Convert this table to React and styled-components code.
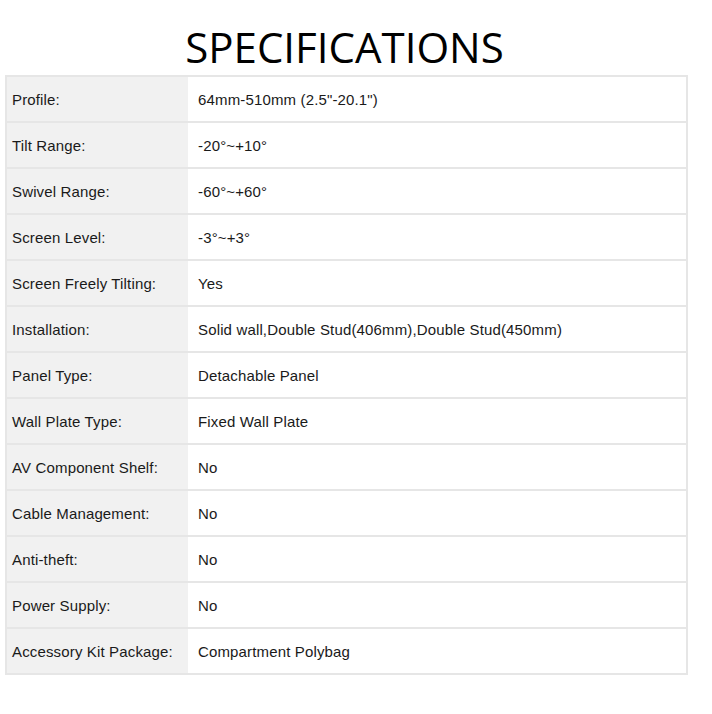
import styled, { createGlobalStyle } from "styled-components";

const GlobalStyle = createGlobalStyle`
	body {
		margin: 0;
		background: #fff;
	}
`;

const Page = styled.div`
	width: 683px;
	padding: 18px 0 0 5px;
`;

const Title = styled.h1`
	margin: 0;
	text-align: center;
	font-family: "Open Sans", "Noto Sans", sans-serif;
	font-weight: 400;
	font-size: 42px;
	line-height: 57px;
	color: #000;
	padding-right: 4px;
`;

const Table = styled.table`
	width: 100%;
	border-collapse: collapse;
	border: 2px solid #e6e6e6;
	font-family: "Liberation Sans", Arial, sans-serif;
	font-size: 15px;
	color: #1a1a1a;
`;

const Row = styled.tr`
	border-top: 2px solid #e6e6e6;

	&:first-child {
		border-top: none;
	}
`;

const Cell = styled.td`
	height: 44px;
	padding: 0 0 0 ${({ $label }) => ($label ? "5px" : "10px")};
	width: ${({ $label }) => ($label ? "176px" : "auto")};
	background: ${({ $label }) => ($label ? "#f1f1f1" : "#fff")};
	vertical-align: middle;
	white-space: nowrap;
	letter-spacing: 0.15px;
`;

const specs = [
	["Profile:", "64mm-510mm (2.5\"-20.1\")"],
	["Tilt Range:", "-20°~+10°"],
	["Swivel Range:", "-60°~+60°"],
	["Screen Level:", "-3°~+3°"],
	["Screen Freely Tilting:", "Yes"],
	["Installation:", "Solid wall,Double Stud(406mm),Double Stud(450mm)"],
	["Panel Type:", "Detachable Panel"],
	["Wall Plate Type:", "Fixed Wall Plate"],
	["AV Component Shelf:", "No"],
	["Cable Management:", "No"],
	["Anti-theft:", "No"],
	["Power Supply:", "No"],
	["Accessory Kit Package:", "Compartment Polybag"],
];

const App = () => {
	return (
		<Page>
			<GlobalStyle />
			<Title>SPECIFICATIONS</Title>
			<Table>
				<tbody>
					{specs.map(([label, value]) => (
						<Row key={label}>
							<Cell $label>{label}</Cell>
							<Cell>{value}</Cell>
						</Row>
					))}
				</tbody>
			</Table>
		</Page>
	);
};

export default App;
